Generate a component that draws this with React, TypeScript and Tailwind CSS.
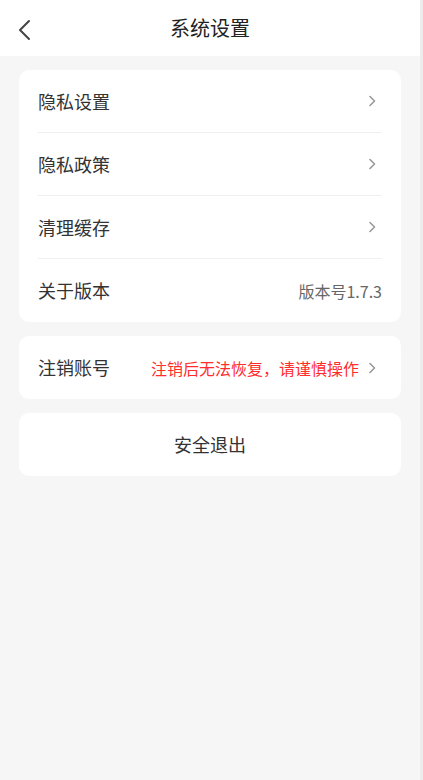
import React from "react";

const font = { fontFamily: '"Noto Sans CJK SC", "Noto Sans", sans-serif' };

function Chevron() {
  return (
    <svg width="10" height="14" viewBox="0 0 10 14" className="shrink-0 mr-[5px]">
      <path d="M3 2.5 L7.5 7 L3 11.5" fill="none" stroke="#9a9a9a" strokeWidth="1.6" strokeLinecap="round" strokeLinejoin="round" />
    </svg>
  );
}

function Row({ label, right, arrow = true, divider = true }: { label: string; right?: React.ReactNode; arrow?: boolean; divider?: boolean }) {
  return (
    <div className={`h-[63px] flex items-center justify-between mx-[19px] ${divider ? "border-b border-[#f0f0f0]" : ""}`}>
      <span className="text-[18px] text-[#333]">{label}</span>
      <div className="flex items-center gap-[8px]">
        {right}
        {arrow && <Chevron />}
      </div>
    </div>
  );
}

export default function App() {
  return (
    <div className="flex min-h-[780px] w-[423px]" style={font}>
      <div className="w-[420px] bg-[#f6f6f6]">
        <div className="h-[56px] bg-white relative flex items-center justify-center">
          <button className="absolute left-[15px] top-[17px]">
            <svg width="20" height="26" viewBox="0 0 20 26">
              <path d="M14 4 L5 13 L14 22" fill="none" stroke="#444" strokeWidth="2" strokeLinecap="round" strokeLinejoin="round" />
            </svg>
          </button>
          <h1 className="text-[20px] text-[#222]">系统设置</h1>
        </div>

        <div className="px-[19px] pt-[14px] flex flex-col gap-[14px]">
          <div className="bg-white rounded-[10px]">
            <Row label="隐私设置" />
            <Row label="隐私政策" />
            <Row label="清理缓存" />
            <Row
              label="关于版本"
              arrow={false}
              divider={false}
              right={<span className="text-[16px] text-[#666]">版本号1.7.3</span>}
            />
          </div>

          <div className="bg-white rounded-[10px]">
            <Row
              label="注销账号"
              divider={false}
              right={<span className="text-[16px] text-[#ff2d2d]">注销后无法恢复，请谨慎操作</span>}
            />
          </div>

          <div className="bg-white rounded-[10px] h-[63px] flex items-center justify-center">
            <span className="text-[18px] text-[#333]">安全退出</span>
          </div>
        </div>
      </div>
      <div className="w-[3px] bg-[#ececec]" />
    </div>
  );
}
